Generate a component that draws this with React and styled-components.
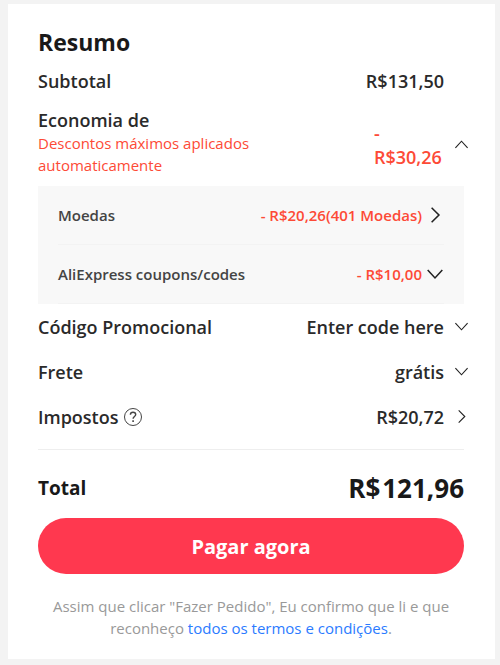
import styled, { createGlobalStyle } from "styled-components";

const GlobalStyle = createGlobalStyle`
  * {
    box-sizing: border-box;
  }
  body {
    margin: 0;
    background: #f3f3f3;
    color: #2a2a2a;
    font-family: "Open Sans", "Noto Sans", sans-serif;
  }
  button {
    border: none;
    padding: 0;
    background: none;
    color: inherit;
    font: inherit;
    cursor: pointer;
  }
`;

const Page = styled.main`
  padding: 4px 5px 6px 8px;
`;

const Card = styled.section`
  background: #fff;
  padding: 22px 26px 20px 30px;
`;

const Title = styled.h1`
  margin: 0;
  font-size: 23px;
  line-height: 32px;
  font-weight: 700;
  color: #191919;
`;

const Row = styled.div`
  display: flex;
  align-items: center;
  justify-content: space-between;
  min-height: 45px;
  font-size: 18px;
  line-height: 24px;
  font-weight: 600;
`;

const Label = styled.span`
  display: flex;
  align-items: center;
  gap: 4px;
`;

const Value = styled.span`
  margin-right: 25px;
`;

const Toggle = styled.button`
  display: flex;
  align-items: center;
  gap: 10px;
`;

const Savings = styled.div`
  display: flex;
  align-items: center;
  padding: 5px 0;
  font-size: 18px;
  line-height: 24px;
  font-weight: 600;
`;

const SavingsText = styled.div`
  flex: 1;
  padding-bottom: 5px;
`;

const Hint = styled.p`
  margin: 0;
  max-width: 250px;
  font-size: 15px;
  line-height: 22px;
  font-weight: 400;
  color: #fd4a36;
`;

const SavingsValue = styled.span`
  width: 70px;
  margin-right: 10px;
  color: #fd4a36;
`;

const Panel = styled.div`
  margin-right: 5px;
  padding: 0 20px;
  background: #f8f8f8;
`;

const PanelRow = styled.div`
  display: flex;
  align-items: center;
  justify-content: space-between;
  height: 59px;
  border-bottom: 1px solid #f3f3f3;
  font-size: 15px;
  line-height: 20px;
  font-weight: 600;
  color: #444;
`;

const PanelToggle = styled.button`
  display: flex;
  align-items: center;
  gap: 4px;
  color: #fd4a36;
`;

const Divider = styled.hr`
  margin: 10px 5px 0 0;
  border: none;
  border-top: 1px solid #eee;
`;

const TotalRow = styled.div`
  display: flex;
  align-items: center;
  justify-content: space-between;
  margin-right: 5px;
  padding: 20px 0 12px;
  font-size: 19px;
  line-height: 36px;
  font-weight: 700;
  color: #191919;
`;

const TotalPrice = styled.strong`
  display: flex;
  gap: 2px;
  font-size: 26px;
  font-weight: 700;
`;

const PayButton = styled.button`
  display: block;
  width: calc(100% - 5px);
  height: 56px;
  border-radius: 28px;
  background: #ff384f;
  color: #fff;
  font-size: 20px;
  font-weight: 700;
`;

const Legal = styled.p`
  margin: 21px 5px 0 0;
  font-size: 15px;
  line-height: 22px;
  text-align: center;
  color: #999;
`;

const Link = styled.a`
  color: #2b7bff;
  text-decoration: none;
`;

const Icon = styled.svg`
  flex: none;
  display: block;
  fill: none;
  stroke: ${({ $color }) => $color || "#222"};
  stroke-width: ${({ $weight }) => $weight || 1.2};
`;

const paths = {
  up: "M1.5 11.5 8 4.5l6.5 7",
  down: "M1.5 4.5 8 11.5l6.5-7",
  right: "M5 1.5 11.5 8 5 14.5",
};

const Chevron = ({ dir, size = 15, weight }) => (
  <Icon width={size} height={size} viewBox="0 0 16 16" $weight={weight} aria-hidden="true">
    <path d={paths[dir]} />
  </Icon>
);

const Help = () => (
  <Icon width="20" height="20" viewBox="0 0 20 20" $color="#444" aria-hidden="true">
    <circle cx="10" cy="10" r="8.5" strokeWidth="1" />
    <path d="M7.4 7.8c0-1.6 1-2.5 2.6-2.5s2.7.9 2.7 2.3c0 1.9-2.6 2-2.6 4.2" strokeWidth="1.4" />
    <path d="M10.1 13.3v1.6" strokeWidth="1.6" />
  </Icon>
);

const details = [
  { label: "Moedas", value: "- R$20,26(401 Moedas)", dir: "right" },
  { label: "AliExpress coupons/codes", value: "- R$10,00", dir: "down" },
];

const extras = [
  { label: "Código Promocional", value: "Enter code here", dir: "down" },
  { label: "Frete", value: "grátis", dir: "down" },
  { label: "Impostos", value: "R$20,72", dir: "right", help: true },
];

const App = () => {
  return (
    <>
      <GlobalStyle />
      <Page>
        <Card>
          <Title>Resumo</Title>
          <Row>
            <Label>Subtotal</Label>
            <Value>R$131,50</Value>
          </Row>
          <Savings>
            <SavingsText>
              Economia de
              <Hint>Descontos máximos aplicados automaticamente</Hint>
            </SavingsText>
            <SavingsValue>- R$30,26</SavingsValue>
            <Toggle aria-label="Economia de">
              <Chevron dir="up" />
            </Toggle>
          </Savings>
          <Panel>
            {details.map((item) => (
              <PanelRow key={item.label}>
                <span>{item.label}</span>
                <PanelToggle>
                  {item.value}
                  <Chevron dir={item.dir} size={18} weight={1.4} />
                </PanelToggle>
              </PanelRow>
            ))}
          </Panel>
          {extras.map((item) => (
            <Row key={item.label}>
              <Label>
                {item.label}
                {item.help && (
                  <button aria-label="Ajuda">
                    <Help />
                  </button>
                )}
              </Label>
              <Toggle>
                {item.value}
                <Chevron dir={item.dir} />
              </Toggle>
            </Row>
          ))}
          <Divider />
          <TotalRow>
            <span>Total</span>
            <TotalPrice>
              <span>R$</span>
              <span>121,96</span>
            </TotalPrice>
          </TotalRow>
          <PayButton>Pagar agora</PayButton>
          <Legal>
            Assim que clicar "Fazer Pedido", Eu confirmo que li e que reconheço{" "}
            <Link href="#termos">todos os termos e condições</Link>.
          </Legal>
        </Card>
      </Page>
    </>
  );
};

export default App;
